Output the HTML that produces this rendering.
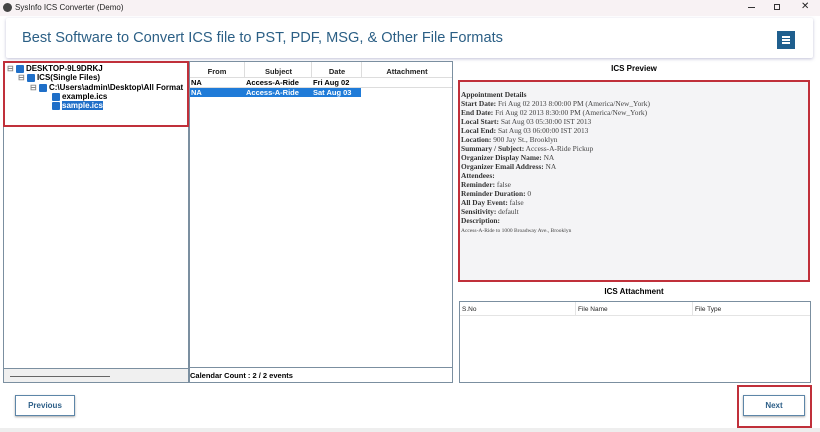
<!DOCTYPE html>
<html><head><style>
*{margin:0;padding:0;box-sizing:border-box}
body{width:820px;height:432px;background:#fff;font-family:"Liberation Sans",sans-serif;position:relative;overflow:hidden}
.a{position:absolute}
.tb{left:0;top:0;width:820px;height:16px;background:#f8f2f4;font-size:8px;color:#222}
.hdr{left:6px;top:18px;width:807px;height:40px;background:#fff;box-shadow:0 1px 3px rgba(80,80,140,.35);border-radius:2px}
.t{font-size:10px;color:#000}
.b{font-weight:bold}
.cb{display:inline-block;width:8px;height:8px;background:#1f6fc8;border-radius:1px;vertical-align:middle;margin-right:2px}
.pv{font-family:"Liberation Serif",serif;font-size:7.4px;color:#444;line-height:9px}
.pv b{color:#333}
.btn{border:1px solid #5d86a8;box-shadow:0 1px 2px #aaa;font-size:8px;font-weight:bold;color:#2d5f88;text-align:center;line-height:19px;background:#fff}
</style></head><body>
<div class="a tb"><span class="a" style="left:3px;top:3px;width:9px;height:9px;border-radius:50%;background:#444"></span><span class="a" style="left:15px;top:3px">SysInfo ICS Converter (Demo)</span>
<span class="a" style="left:748px;top:7px;width:7px;height:1px;background:#333"></span>
<span class="a" style="left:774px;top:4px;width:6px;height:6px;border:1px solid #333"></span>
<span class="a" style="left:801px;top:1px;font-size:10px">✕</span></div>
<div class="a hdr"><div class="a" style="left:16px;top:12px;font-size:14.6px;color:#2b5f85">Best Software to Convert ICS file to PST, PDF, MSG, &amp; Other File Formats</div>
<div class="a" style="left:771px;top:13px;width:18px;height:18px;background:#1f5f8e"><div class="a" style="left:5px;top:5px;width:8px;height:1.5px;background:#fff;box-shadow:0 3px #fff,0 6px #fff"></div></div></div>
<!-- left -->
<div class="a" style="left:3px;top:61px;width:186px;height:322px;border:1px solid #7b8fa0;background:#fff"></div>
<div class="a" style="left:3px;top:368px;width:186px;height:15px;background:#f0f0f0;border:1px solid #7b8fa0"></div>
<div class="a" style="left:10px;top:376px;width:100px;height:1px;background:#666"></div>
<div class="a" style="left:3px;top:61px;width:186px;height:66px;border:2px solid #c0303a"></div>
<div class="a t b" style="left:7px;top:64px;font-size:8px"><span style="color:#888">⊟</span> <span class="cb"></span>DESKTOP-9L9DRKJ</div>
<div class="a t b" style="left:18px;top:73px;font-size:8px"><span style="color:#888">⊟</span> <span class="cb"></span>ICS(Single Files)</div>
<div class="a t b" style="left:30px;top:83px;font-size:8px;white-space:nowrap;width:155px;overflow:hidden"><span style="color:#888">⊟</span> <span class="cb"></span>C:\Users\admin\Desktop\All Format Files</div>
<div class="a t b" style="left:52px;top:92px;font-size:8px"><span class="cb"></span>example.ics</div>
<div class="a t b" style="left:52px;top:101px;font-size:8px"><span class="cb"></span><span style="background:#1f6fc8;color:#fff">sample.ics</span></div>
<!-- middle -->
<div class="a" style="left:189px;top:61px;width:264px;height:322px;border:1px solid #7b8fa0;background:#fff"></div>
<div class="a" style="left:190px;top:367px;width:262px;height:1px;background:#7b8fa0"></div>
<div class="a b" style="left:190px;top:371px;font-size:7.5px">Calendar Count : 2 / 2 events</div>
<div class="a" style="left:190px;top:62px;width:262px;height:16px;border-bottom:1px solid #ddd;font-size:7.5px;font-weight:bold;color:#222">
<span class="a" style="left:0;width:54px;text-align:center;top:5px">From</span>
<span class="a" style="left:55px;width:67px;text-align:center;top:5px">Subject</span>
<span class="a" style="left:122px;width:50px;text-align:center;top:5px">Date</span>
<span class="a" style="left:172px;width:90px;text-align:center;top:5px">Attachment</span>
<span class="a" style="left:54px;top:0;height:16px;width:1px;background:#ddd"></span>
<span class="a" style="left:121px;top:0;height:16px;width:1px;background:#ddd"></span>
<span class="a" style="left:171px;top:0;height:16px;width:1px;background:#ddd"></span></div>
<div class="a b" style="left:190px;top:78px;width:262px;height:10px;font-size:7.5px;border-bottom:1px solid #ddd"><span class="a" style="left:1px">NA</span><span class="a" style="left:56px">Access-A-Ride</span><span class="a" style="left:123px">Fri Aug 02</span></div>
<div class="a b" style="left:190px;top:88px;width:171px;height:9px;font-size:7.5px;background:#1f7bd8;color:#fff"><span class="a" style="left:1px">NA</span><span class="a" style="left:56px">Access-A-Ride</span><span class="a" style="left:123px">Sat Aug 03</span></div>
<!-- right -->
<div class="a b" style="left:458px;top:64px;width:352px;text-align:center;font-size:8px">ICS Preview</div>
<div class="a" style="left:458px;top:80px;width:352px;height:202px;border:2px solid #c0303a;background:#f4f4f6"></div>
<div class="a pv" style="left:461px;top:90px">
<b>Appointment Details</b><br><b>Start Date:</b> Fri Aug 02 2013 8:00:00 PM (America/New_York)<br><b>End Date:</b> Fri Aug 02 2013 8:30:00 PM (America/New_York)<br><b>Local Start:</b> Sat Aug 03 05:30:00 IST 2013<br><b>Local End:</b> Sat Aug 03 06:00:00 IST 2013<br><b>Location:</b> 900 Jay St., Brooklyn<br><b>Summary / Subject:</b> Access-A-Ride Pickup<br><b>Organizer Display Name:</b> NA<br><b>Organizer Email Address:</b> NA<br><b>Attendees:</b><br><b>Reminder:</b> false<br><b>Reminder Duration:</b> 0<br><b>All Day Event:</b> false<br><b>Sensitivity:</b> default<br><b>Description:</b><br><span style="font-size:5.5px">Access-A-Ride to 1000 Broadway Ave., Brooklyn</span></div>
<div class="a b" style="left:458px;top:287px;width:352px;text-align:center;font-size:8px">ICS Attachment</div>
<div class="a" style="left:459px;top:301px;width:352px;height:82px;border:1px solid #7b8fa0;background:#fff"></div>
<div class="a" style="left:460px;top:302px;width:350px;height:14px;border-bottom:1px solid #e4e4e4;font-size:6.5px;color:#222">
<span class="a" style="left:2px;top:4px">S.No</span><span class="a" style="left:118px;top:4px">File Name</span><span class="a" style="left:235px;top:4px">File Type</span>
<span class="a" style="left:115px;top:0;width:1px;height:14px;background:#e4e4e4"></span><span class="a" style="left:232px;top:0;width:1px;height:14px;background:#e4e4e4"></span></div>
<!-- buttons -->
<div class="a btn" style="left:15px;top:395px;width:60px;height:21px">Previous</div>
<div class="a btn" style="left:743px;top:395px;width:62px;height:21px">Next</div>
<div class="a" style="left:737px;top:385px;width:75px;height:43px;border:2px solid #c0303a"></div>
<div class="a" style="left:0;top:428px;width:820px;height:4px;background:#eee"></div>
</body></html>
